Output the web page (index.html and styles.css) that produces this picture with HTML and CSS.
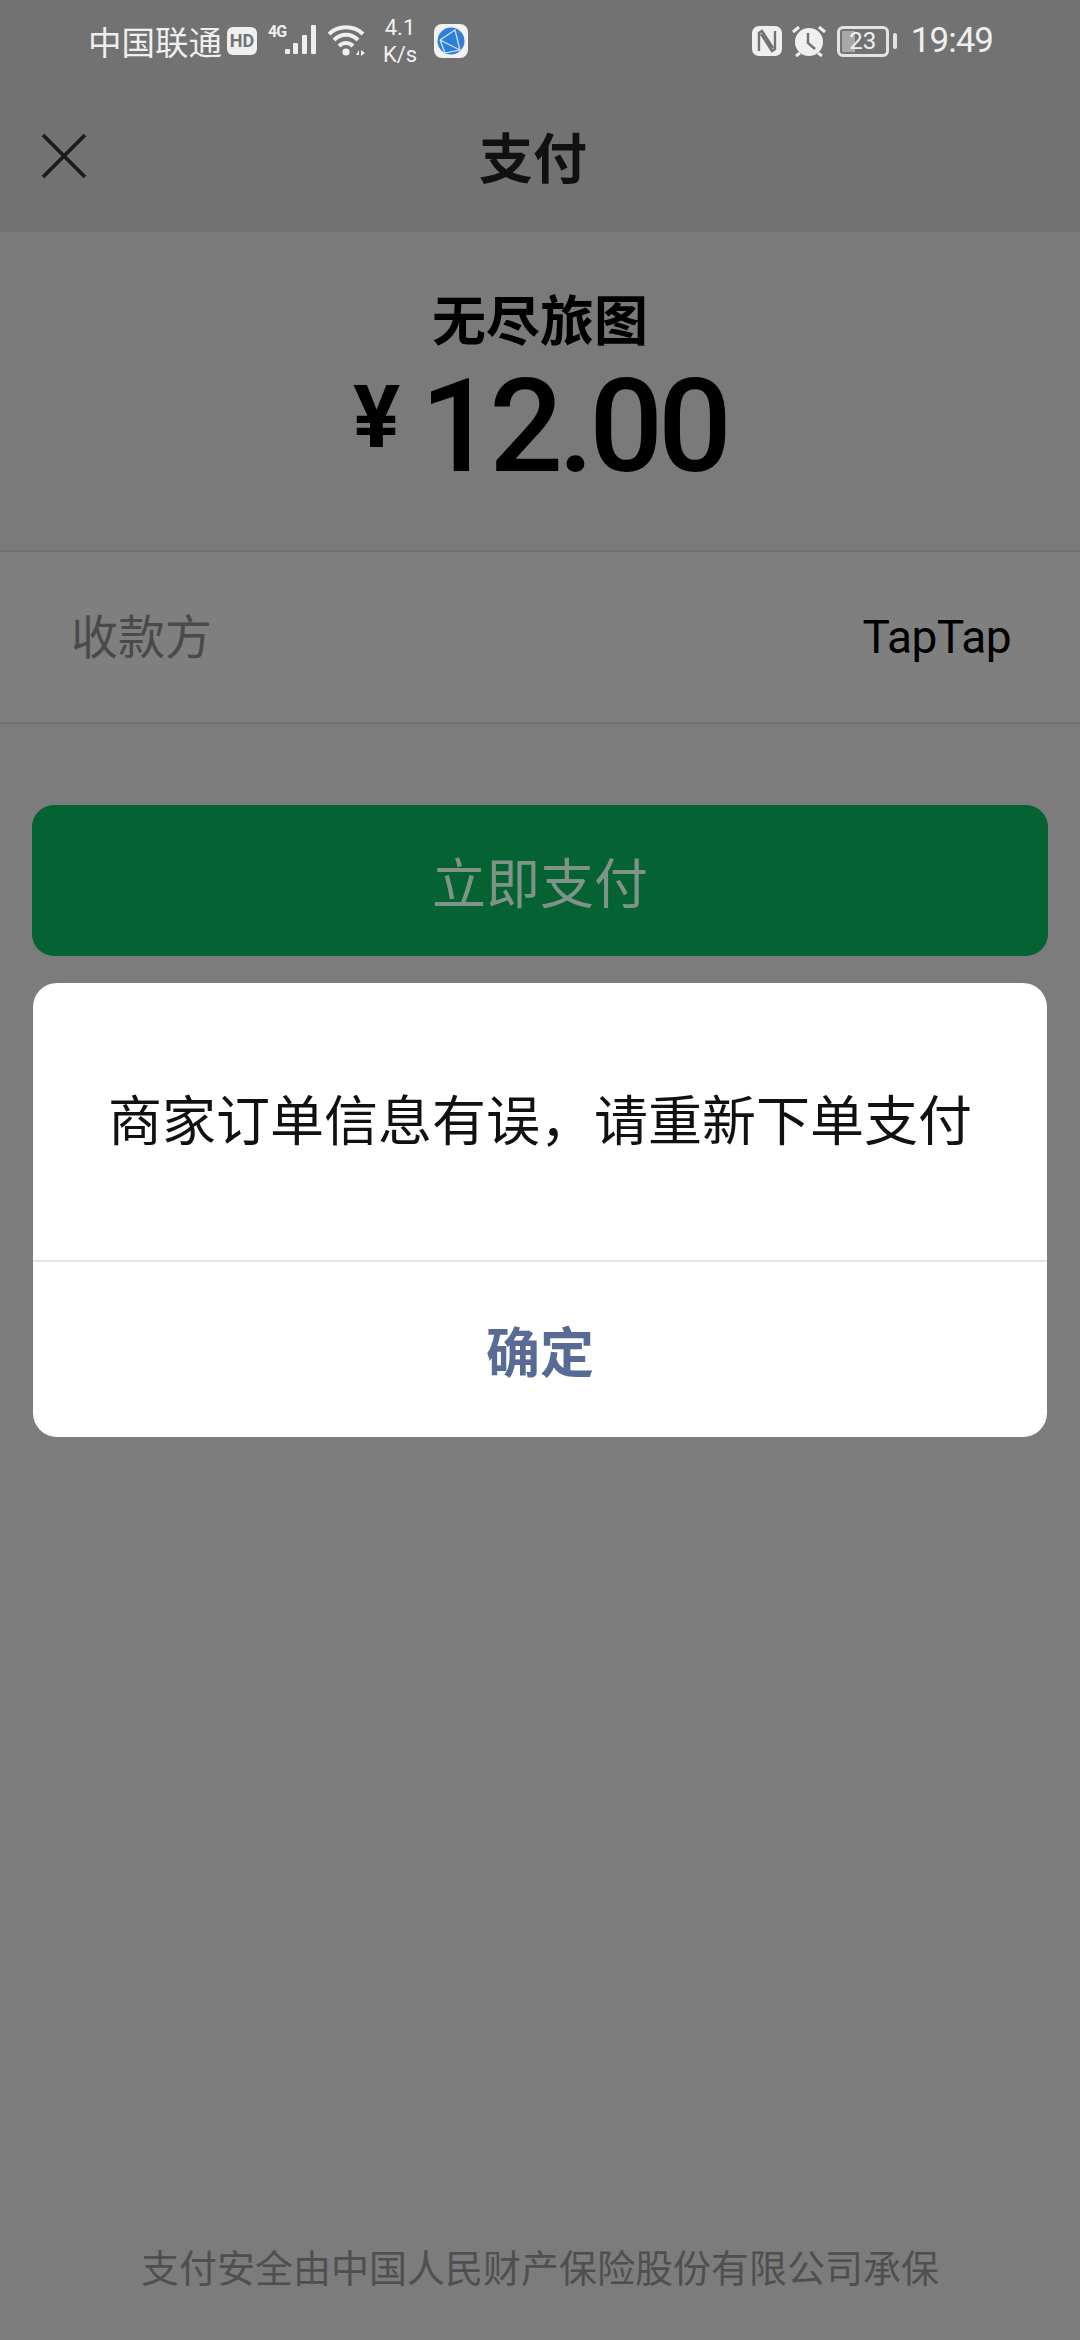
FILE: index.html
```html
<!DOCTYPE html>
<html>
<head>
    <title>支付</title>
    <link rel="stylesheet" href="styles.css">
</head>
<body>
    <div class="page">
        <div class="top-area">
            <div class="status-bar">
                <div class="status-left">
                    <span class="carrier">中国联通</span>
                    <span class="hd-badge">HD</span>
                    <span class="signal-label">4G</span>
                    <svg class="signal" width="33" height="32" viewBox="0 0 33 32">
                        <rect x="0" y="24" width="5" height="5" rx="1"/>
                        <rect x="8" y="18" width="5" height="11" rx="1"/>
                        <rect x="17" y="10" width="5" height="19" rx="1"/>
                        <rect x="26" y="0" width="5" height="29" rx="1"/>
                    </svg>
                    <svg class="wifi" width="38" height="32" viewBox="0 0 38 32">
                        <path d="M1 9 C10 0 26 0 35 9" />
                        <path d="M6 15 C13 8 23 8 30 15" />
                        <path d="M11 21 C15 17 21 17 25 21" />
                        <circle cx="18" cy="27" r="3.6" class="wifi-fill"/>
                        <path d="M28 30 L31 25 L31 30 Z M33 25 L37 28 L33 31 Z" class="wifi-fill"/>
                    </svg>
                    <span class="net-speed"><span>4.1</span><span>K/s</span></span>
                    <svg class="app-icon" width="34" height="34" viewBox="0 0 34 34">
                        <rect width="34" height="34" rx="8" fill="#f2f2f2"/>
                        <circle cx="17" cy="17" r="13.5" fill="#2f7fd6"/>
                        <path d="M6 16 L21 6 L26 26 L11 29 M6 16 L26 26 M6 16 L11 29" fill="none" stroke="#d5e6f7" stroke-width="1.2"/>
                    </svg>
                </div>
                <div class="status-right">
                    <svg class="nfc" width="30" height="30" viewBox="0 0 30 30">
                        <rect width="30" height="30" rx="7" fill="#efefef"/>
                        <path d="M7 25 V7 L10 5 L21 22 M23 5 V23 L20 25 L9 8" fill="none" stroke="#727272" stroke-width="2.4"/>
                    </svg>
                    <svg class="alarm" width="34" height="32" viewBox="0 0 34 32">
                        <circle cx="17" cy="17" r="14" fill="#efefef"/>
                        <path d="M16 8 V18 L23 24" fill="none" stroke="#727272" stroke-width="2.5"/>
                        <path d="M1 7 L7 2 M33 7 L27 2 M8 28 L4 31 M26 28 L30 31" stroke="#efefef" stroke-width="3" fill="none"/>
                    </svg>
                    <div class="battery">
                        <div class="battery-body">
                            <div class="battery-fill"></div>
                            <span class="battery-text">23</span>
                        </div>
                        <div class="battery-tip"></div>
                    </div>
                    <span class="clock">19:49</span>
                </div>
            </div>
            <div class="nav-bar">
                <svg class="close-icon" width="46" height="46" viewBox="0 0 46 46">
                    <path d="M2 2 L44 44 M44 2 L2 44" fill="none" stroke="#1a1a1a" stroke-width="3.6"/>
                </svg>
                <span class="nav-title">支付</span>
            </div>
        </div>

        <div class="order-info">
            <div class="merchant">无尽旅图</div>
            <div class="amount"><span class="currency">¥</span><span class="price">12.00</span></div>
        </div>

        <div class="payee-row">
            <span class="payee-label">收款方</span>
            <span class="payee-name">TapTap</span>
        </div>

        <div class="pay-button">立即支付</div>

        <div class="footer-note">支付安全由中国人民财产保险股份有限公司承保</div>
    </div>

    <div class="dialog">
        <div class="dialog-message">商家订单信息有误&#65292;请重新下单支付</div>
        <div class="dialog-action">确定</div>
    </div>
</body>
</html>
```

FILE: styles.css
```css
body {
    font-family: "Noto Sans CJK SC", "Noto Sans", sans-serif;
    background-color: #7c7c7c;
    margin: 0;
    padding: 0;
}
.page {
    width: 1080px;
    height: 2340px;
    display: flex;
    flex-direction: column;
    overflow: hidden;
}
.top-area {
    background-color: #727272;
    height: 232px;
}
.status-bar {
    height: 82px;
    padding: 0 87px 0 88px;
    display: flex;
    justify-content: space-between;
    align-items: center;
    color: #efefef;
}
.status-left, .status-right {
    display: flex;
    align-items: center;
}
.carrier {
    font-size: 33.5px;
    line-height: 40px;
}
.hd-badge {
    margin-left: 5px;
    width: 30px;
    height: 28px;
    border-radius: 6px;
    background-color: #efefef;
    color: #727272;
    font-family: "Roboto", sans-serif;
    font-size: 18px;
    font-weight: 700;
    line-height: 28px;
    text-align: center;
}
.signal-label {
    margin-left: 11px;
    margin-bottom: 18px;
    width: 17px;
    font-family: "Roboto", sans-serif;
    font-size: 16px;
    font-weight: 700;
    letter-spacing: -1px;
    line-height: 14px;
}
.signal {
    fill: #efefef;
}
.wifi {
    margin-left: 10px;
    fill: none;
    stroke: #efefef;
    stroke-width: 4;
}
.wifi-fill {
    fill: #efefef;
    stroke: none;
}
.net-speed {
    margin-left: 16px;
    width: 36px;
    display: flex;
    flex-direction: column;
    align-items: center;
    font-family: "Roboto", sans-serif;
    font-size: 22px;
    line-height: 27px;
}
.app-icon {
    margin-left: 16px;
}
.nfc {
    margin-right: 10px;
}
.alarm {
    margin-right: 11px;
}
.battery {
    display: flex;
    align-items: center;
    gap: 4px;
    margin-right: 14px;
}
.battery-body {
    position: relative;
    width: 52px;
    height: 31px;
    box-sizing: border-box;
    border: 3px solid #e4e4e4;
    border-radius: 6px;
    text-align: center;
}
.battery-fill {
    position: absolute;
    left: 2px;
    top: 2px;
    bottom: 2px;
    width: 13px;
    background-color: #a8a8a8;
}
.battery-text {
    position: relative;
    display: block;
    font-family: "Roboto", sans-serif;
    font-size: 24px;
    line-height: 25px;
}
.battery-tip {
    width: 4px;
    height: 16px;
    border-radius: 2px;
    background-color: #e4e4e4;
}
.clock {
    font-family: "Roboto", sans-serif;
    font-size: 35px;
    letter-spacing: -1px;
    line-height: 40px;
}
.nav-bar {
    height: 150px;
    position: relative;
    display: flex;
    align-items: center;
    justify-content: center;
}
.close-icon {
    position: absolute;
    left: 41px;
    top: 51px;
}
.nav-title {
    font-size: 54px;
    font-weight: 700;
    color: #111;
    line-height: 60px;
    margin-right: 14px;
    margin-top: -2px;
}
.order-info {
    height: 320px;
    box-sizing: border-box;
    padding-top: 55px;
    background-color: #7a7a7a;
    border-bottom: 2px solid #707070;
    text-align: center;
    color: #000;
}
.merchant {
    font-size: 54px;
    font-weight: 700;
    line-height: 62px;
}
.amount {
    display: flex;
    justify-content: center;
    align-items: baseline;
    height: 130px;
    line-height: 130px;
    margin-top: 13px;
    font-family: "Roboto", sans-serif;
    font-weight: 500;
}
.currency {
    font-size: 88px;
    font-weight: 700;
    margin-right: 20px;
    position: relative;
    top: -24px;
}
.price {
    font-size: 130px;
    letter-spacing: -5px;
}
.payee-row {
    height: 172px;
    box-sizing: border-box;
    padding: 0 69px 0 71px;
    background-color: #7f7f7f;
    border-bottom: 2px solid #707070;
    display: flex;
    justify-content: space-between;
    align-items: center;
}
.payee-label {
    font-size: 47px;
    color: #4a4a4a;
    margin-top: -8px;
}
.payee-name {
    font-family: "Roboto", sans-serif;
    font-size: 46px;
    letter-spacing: -0.5px;
    color: #000;
}
.pay-button {
    margin: 81px 32px 0;
    height: 151px;
    border-radius: 22px;
    background-color: #046233;
    color: #7f9387;
    font-size: 54px;
    line-height: 151px;
    text-align: center;
}
.footer-note {
    margin-top: auto;
    padding-bottom: 48px;
    font-size: 38px;
    line-height: 52px;
    color: #4f4f4f;
    text-align: center;
}
.dialog {
    position: absolute;
    left: 33px;
    top: 983px;
    width: 1014px;
    height: 454px;
    border-radius: 24px;
    background-color: #fff;
    display: flex;
    flex-direction: column;
}
.dialog-message {
    height: 279px;
    box-sizing: border-box;
    padding-bottom: 8px;
    border-bottom: 2px solid #e5e5e5;
    display: flex;
    align-items: center;
    justify-content: center;
    font-size: 54px;
    color: #111;
}
.dialog-action {
    flex: 1;
    display: flex;
    align-items: center;
    justify-content: center;
    font-size: 54px;
    font-weight: 700;
    color: #576b95;
}
```
